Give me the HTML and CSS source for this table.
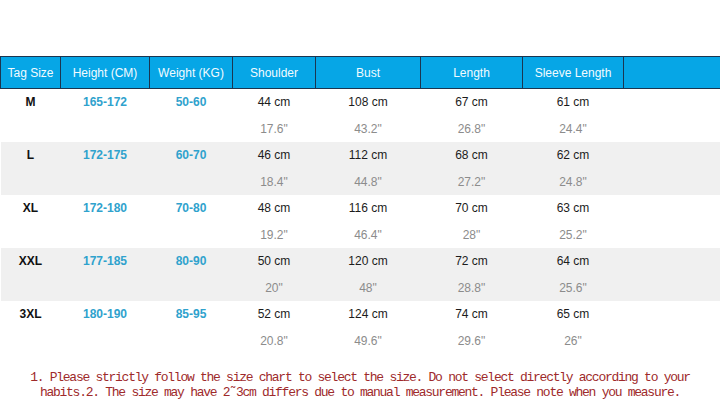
FILE: index.html
```html
<!DOCTYPE html>
<html>
<head>
<meta charset="utf-8">
<link rel="stylesheet" href="styles.css">
</head>
<body>
<table class="chart">
  <colgroup>
    <col class="c1"><col class="c2"><col class="c3"><col class="c4"><col class="c5"><col class="c6"><col class="c7"><col class="c8">
  </colgroup>
  <thead>
    <tr><th>Tag Size</th><th>Height (CM)</th><th>Weight (KG)</th><th>Shoulder</th><th>Bust</th><th>Length</th><th>Sleeve Length</th><th></th></tr>
  </thead>
  <tbody>
    <tr class="a"><td class="tag">M</td><td class="hw">165-172</td><td class="hw">50-60</td><td class="cm">44 cm</td><td class="cm">108 cm</td><td class="cm">67 cm</td><td class="cm">61 cm</td><td></td></tr>
    <tr class="b"><td></td><td></td><td></td><td class="in">17.6"</td><td class="in">43.2"</td><td class="in">26.8"</td><td class="in">24.4"</td><td></td></tr>
    <tr class="a alt"><td class="tag">L</td><td class="hw">172-175</td><td class="hw">60-70</td><td class="cm">46 cm</td><td class="cm">112 cm</td><td class="cm">68 cm</td><td class="cm">62 cm</td><td></td></tr>
    <tr class="b alt"><td></td><td></td><td></td><td class="in">18.4"</td><td class="in">44.8"</td><td class="in">27.2"</td><td class="in">24.8"</td><td></td></tr>
    <tr class="a"><td class="tag">XL</td><td class="hw">172-180</td><td class="hw">70-80</td><td class="cm">48 cm</td><td class="cm">116 cm</td><td class="cm">70 cm</td><td class="cm">63 cm</td><td></td></tr>
    <tr class="b"><td></td><td></td><td></td><td class="in">19.2"</td><td class="in">46.4"</td><td class="in">28"</td><td class="in">25.2"</td><td></td></tr>
    <tr class="a alt"><td class="tag">XXL</td><td class="hw">177-185</td><td class="hw">80-90</td><td class="cm">50 cm</td><td class="cm">120 cm</td><td class="cm">72 cm</td><td class="cm">64 cm</td><td></td></tr>
    <tr class="b alt"><td></td><td></td><td></td><td class="in">20"</td><td class="in">48"</td><td class="in">28.8"</td><td class="in">25.6"</td><td></td></tr>
    <tr class="a"><td class="tag">3XL</td><td class="hw">180-190</td><td class="hw">85-95</td><td class="cm">52 cm</td><td class="cm">124 cm</td><td class="cm">74 cm</td><td class="cm">65 cm</td><td></td></tr>
    <tr class="b"><td></td><td></td><td></td><td class="in">20.8"</td><td class="in">49.6"</td><td class="in">29.6"</td><td class="in">26"</td><td></td></tr>
  </tbody>
</table>
<p class="note">1. Please strictly follow the size chart to select the size. Do not select directly according to your<br>habits.2. The size may have 2˜3cm differs due to manual measurement. Please note when you measure.</p>
</body>
</html>
```
FILE: styles.css
```css
html, body {
  margin: 0;
  padding: 0;
  background: #ffffff;
}
body {
  width: 720px;
  height: 416px;
  overflow: hidden;
  font-family: "Liberation Sans", Arial, sans-serif;
}
.chart {
  margin-top: 56px;
  width: 720px;
  border-collapse: collapse;
  table-layout: fixed;
  font-size: 12px;
}
.c1 { width: 60px; }
.c2 { width: 89px; }
.c3 { width: 83px; }
.c4 { width: 83px; }
.c5 { width: 105px; }
.c6 { width: 102px; }
.c7 { width: 101px; }
.c8 { width: 97px; }
.chart th {
  height: 31px;
  padding: 0;
  background: #06a6e6;
  color: #f2fbff;
  font-weight: normal;
  border: 1px solid #1b3550;
  text-align: center;
  vertical-align: middle;
}
.chart td {
  height: 26.5px;
  padding: 0;
  text-align: center;
  vertical-align: middle;
  line-height: 14px;
}
.chart tr.alt td {
  background: #f0f0f0;
}
.tag {
  font-weight: bold;
  color: #111111;
}
.hw {
  font-weight: bold;
  color: #2fa2cd;
}
.cm {
  color: #1c1c1c;
}
.in {
  color: #8c8c8c;
}
.note {
  margin: 16px 0 0 0;
  text-align: center;
  font-family: "Liberation Mono", "Courier New", monospace;
  font-size: 13px;
  letter-spacing: -1.27px;
  line-height: 15px;
  color: #9e2a2b;
}
```
